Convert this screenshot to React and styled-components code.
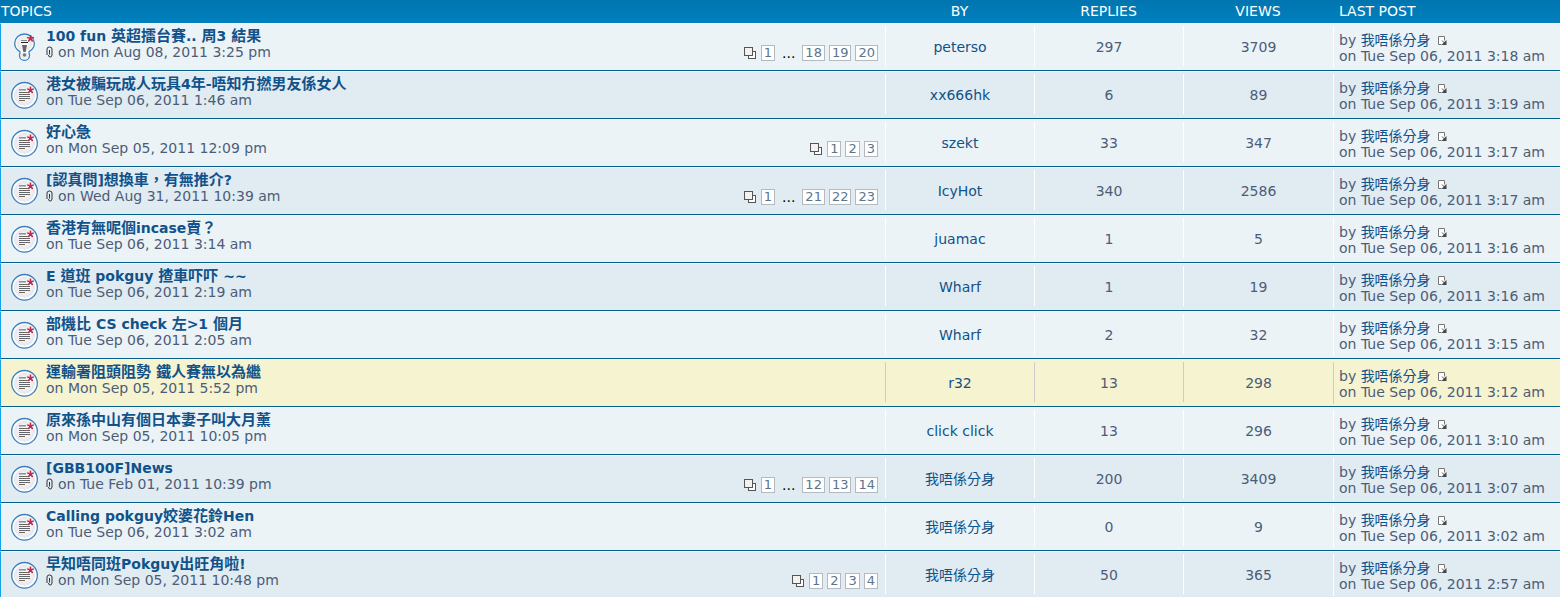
import React from 'react';
import styled, { createGlobalStyle } from 'styled-components';

const GlobalStyle = createGlobalStyle`
  body {
    margin: 0;
    background: #ffffff;
    font-family: "DejaVu Sans", "Noto Sans CJK TC", sans-serif;
    font-size: 14px;
    line-height: 16px;
    color: #4c5d77;
  }
`;

const Forum = styled.main`
  max-height: 100vh;
  overflow: hidden;
`;

const TopicTable = styled.table`
  width: 100%;
  table-layout: fixed;
  border-collapse: separate;
  border-spacing: 0;
`;

const Col = styled.col`
  width: ${(p) => p.$width};
`;

const HeadRow = styled.tr`
  background: linear-gradient(#0075b0, #0081be);
`;

const HeadCell = styled.th`
  height: 23px;
  padding: ${(p) => p.$pad || '0 0 2px'};
  box-sizing: border-box;
  color: #ffffff;
  font-weight: normal;
  text-align: ${(p) => p.$align || 'center'};
  text-transform: uppercase;
`;

const Row = styled.tr`
  --rule: ${(p) => (p.$tone === 'global' ? '#cccccc' : '#ffffff')};
  background: ${(p) => ({ light: '#ecf3f7', dark: '#e1ebf2', global: '#f6f3d0' })[p.$tone]};
`;

const Cell = styled.td`
  height: 48px;
  box-sizing: border-box;
  padding: 0;
  vertical-align: top;
  border-top: 1px solid #ffffff;
  border-bottom: 1px solid #00608f;
`;

const TopicCell = styled(Cell)`
  border-left: 1px solid #12a3eb;
`;

const Topic = styled.div`
  display: flex;
  height: 46px;
  padding: 0 7px 0 10px;
  box-sizing: border-box;
`;

const StateIcon = styled.svg`
  flex: none;
  align-self: center;
  width: 27px;
  height: 30px;
`;

const TopicText = styled.div`
  flex: 1;
  padding: 4px 0 0 8px;
`;

const TopicTitle = styled.a`
  display: block;
  height: 16px;
  line-height: 16px;
  color: #105289;
  font-weight: bold;
  text-decoration: none;
  white-space: nowrap;
  &:hover {
    text-decoration: underline;
  }
`;

const Han = styled.span`
  font-size: 15px;
  line-height: 1;
`;

const Posted = styled.div`
  display: flex;
  align-items: center;
  gap: 4px;
  white-space: nowrap;
`;

const ClipIcon = styled.svg`
  width: 8px;
  height: 12px;
`;

const Pages = styled.nav`
  display: flex;
  align-items: center;
  align-self: flex-end;
  gap: 4px;
  padding-bottom: 9px;
  color: #000000;
`;

const PagesIcon = styled.svg`
  width: 12px;
  height: 12px;
  margin-right: 1px;
`;

const PageLink = styled.a`
  padding: 0 2px;
  border: 1px solid #b4bac0;
  background: #ffffff;
  color: #5c758c;
  font-size: 13px;
  line-height: 14px;
  text-decoration: none;
`;

const Ellipsis = styled.span`
  padding: 0 3px;
`;

const Stat = styled.div`
  height: 40px;
  margin-top: 2px;
  border-left: 1px solid var(--rule);
  line-height: 42px;
  text-align: center;
`;

const LastPost = styled.div`
  height: 42px;
  margin-top: 2px;
  padding: 6px 0 0 5px;
  box-sizing: border-box;
  border-left: 1px solid var(--rule);
  white-space: nowrap;
`;

const UserLink = styled.a`
  color: #105289;
  text-decoration: none;
`;

const JumpLink = styled.a`
  margin-left: 7px;
`;

const topics = [
  { title: '100 fun 英超擂台賽.. 周3 結果', posted: 'Mon Aug 08, 2011 3:25 pm', clip: true, pinned: true, pages: [1, '...', 18, 19, 20], by: 'peterso', replies: 297, views: 3709, last: '3:18' },
  { title: '港女被騙玩成人玩具4年-唔知冇撚男友係女人', posted: 'Tue Sep 06, 2011 1:46 am', by: 'xx666hk', replies: 6, views: 89, last: '3:19' },
  { title: '好心急', posted: 'Mon Sep 05, 2011 12:09 pm', pages: [1, 2, 3], by: 'szekt', replies: 33, views: 347, last: '3:17' },
  { title: '[認真問]想換車，有無推介?', posted: 'Wed Aug 31, 2011 10:39 am', clip: true, pages: [1, '...', 21, 22, 23], by: 'IcyHot', replies: 340, views: 2586, last: '3:17' },
  { title: '香港有無呢個incase賣？', posted: 'Tue Sep 06, 2011 3:14 am', by: 'juamac', replies: 1, views: 5, last: '3:16' },
  { title: 'E 道班 pokguy 揸車吓吓 ~~', posted: 'Tue Sep 06, 2011 2:19 am', by: 'Wharf', replies: 1, views: 19, last: '3:16' },
  { title: '部機比 CS check 左>1 個月', posted: 'Tue Sep 06, 2011 2:05 am', by: 'Wharf', replies: 2, views: 32, last: '3:15' },
  { title: '運輸署阻頭阻勢 鐵人賽無以為繼', posted: 'Mon Sep 05, 2011 5:52 pm', tone: 'global', by: 'r32', replies: 13, views: 298, last: '3:12' },
  { title: '原來孫中山有個日本妻子叫大月薰', posted: 'Mon Sep 05, 2011 10:05 pm', by: 'click click', replies: 13, views: 296, last: '3:10' },
  { title: '[GBB100F]News', posted: 'Tue Feb 01, 2011 10:39 pm', clip: true, pages: [1, '...', 12, 13, 14], by: '我唔係分身', replies: 200, views: 3409, last: '3:07' },
  { title: 'Calling pokguy姣婆花鈴Hen', posted: 'Tue Sep 06, 2011 3:02 am', by: '我唔係分身', replies: 0, views: 9, last: '3:02' },
  { title: '早知唔同班Pokguy出旺角啦!', posted: 'Mon Sep 05, 2011 10:48 pm', clip: true, pages: [1, 2, 3, 4], by: '我唔係分身', replies: 50, views: 365, last: '2:57' },
];

function MixedText({ text }) {
  return text
    .split(/([\u3000-\u9fff\uff00-\uffef]+)/)
    .map((part, i) => (i % 2 ? <Han key={i}>{part}</Han> : part));
}

function Star({ y }) {
  return (
    <g transform={`translate(19.5 ${y})`} stroke="#c0284f" strokeWidth="1.5" fill="none">
      <path d="M0 0V-3.600M0 0L3.400-1.100M0 0L-3.400-1.100M0 0L2.200 3M0 0L-2.200 3" />
    </g>
  );
}

function TopicIcon({ pinned }) {
  return (
    <StateIcon viewBox="0 0 27 30" role="img" aria-label={pinned ? 'Pinned topic, unread posts' : 'Unread posts'}>
      <defs>
        <radialGradient id="disc">
          <stop offset="0" stopColor="#ffffff" />
          <stop offset="1" stopColor="#e6e6ec" />
        </radialGradient>
      </defs>
      {pinned ? (
        <>
          <path
            d="M13.500 2C8 2 3.700 6.100 3.700 11.300c0 3.600 2 6.400 4.900 8.100.5.300.6.700.4 1.300-.3.800-.5 1.600-.5 2.500 0 2.900 2.100 5.200 5 5.200s5-2.300 5-5.200c0-.9-.2-1.700-.5-2.500-.2-.6-.1-1 .4-1.300 2.900-1.700 4.900-4.500 4.900-8.100 0-5.200-4.300-9.300-9.800-9.300z"
            fill="#ffffff"
            stroke="#3c80bd"
            strokeWidth="1.300"
          />
          <circle cx="13.500" cy="11.500" r="7.600" fill="url(#disc)" />
          <circle cx="13.500" cy="23.500" r="3.300" fill="url(#disc)" />
          <path d="M10 8.500h6" stroke="#888888" />
          <path d="M10 10.500h7" stroke="#222222" />
          <path d="M11 13h5l-1.400 7h-2.200z" fill="#666666" />
          <circle cx="13.500" cy="23" r="1.800" fill="#777777" />
        </>
      ) : (
        <>
          <circle cx="13.500" cy="15.300" r="12.800" fill="#ffffff" stroke="#3c80bd" strokeWidth="1.300" />
          <circle cx="13.500" cy="15.300" r="10.500" fill="url(#disc)" />
          <path d="M8 9.800h7" stroke="#888888" strokeWidth="1.400" />
          <path d="M8 12.500h9M8 14.500h11M8 16.500h11M8 18.500h11M8 20.500h6" stroke="#666666" />
        </>
      )}
      <Star y={pinned ? 6.5 : 10} />
    </StateIcon>
  );
}

function TopicRow({ topic, index }) {
  return (
    <Row $tone={topic.tone || (index % 2 ? 'dark' : 'light')}>
      <TopicCell>
        <Topic>
          <TopicIcon pinned={topic.pinned} />
          <TopicText>
            <TopicTitle href="#topic"><MixedText text={topic.title} /></TopicTitle>
            <Posted>
              {topic.clip && (
                <ClipIcon viewBox="0 0 8 12" role="img" aria-label="Attachment">
                  <path d="M3.500 4v4.500M1 9V3Q1 1 3.500 1T6 3v6q0 2-1.800 2T2.500 9" fill="none" stroke="#333333" />
                </ClipIcon>
              )}
              on {topic.posted}
            </Posted>
          </TopicText>
          {topic.pages && (
            <Pages aria-label="Topic pages">
              <PagesIcon viewBox="0 0 12 12" aria-hidden="true">
                <rect x="4.500" y="4.500" width="7" height="7" fill="#ffffff" stroke="#555555" />
                <rect x=".5" y=".5" width="8" height="8" fill="#f2f2f2" stroke="#555555" />
              </PagesIcon>
              {topic.pages.map((page) =>
                page === '...' ? <Ellipsis key={page}>...</Ellipsis> : <PageLink key={page} href="#page">{page}</PageLink>
              )}
            </Pages>
          )}
        </Topic>
      </TopicCell>
      <Cell><Stat><UserLink href="#user">{topic.by}</UserLink></Stat></Cell>
      <Cell><Stat>{topic.replies}</Stat></Cell>
      <Cell><Stat>{topic.views}</Stat></Cell>
      <Cell>
        <LastPost>
          by <UserLink href="#user">我唔係分身</UserLink>
          <JumpLink href="#last" aria-label="View the latest post">
            <svg width="9" height="9" viewBox="0 0 9 9">
              <path d="M3.500 8.500h-3v-8h6v4" fill="#ffffff" stroke="#777777" />
              <path d="M8.500 4v5h-5z" fill="#444444" />
              <path d="M4 4.500l2.500 2.500" stroke="#555555" />
            </svg>
          </JumpLink>
          <br />
          on Tue Sep 06, 2011 {topic.last} am
        </LastPost>
      </Cell>
    </Row>
  );
}

export default function App() {
  return (
    <Forum>
      <GlobalStyle />
      <TopicTable>
        <colgroup>
          <Col $width="auto" />
          <Col $width="149px" />
          <Col $width="149px" />
          <Col $width="150px" />
          <Col $width="227px" />
        </colgroup>
        <thead>
          <HeadRow>
            <HeadCell scope="col" $align="left" $pad="0 0 2px 1px">Topics</HeadCell>
            <HeadCell scope="col">By</HeadCell>
            <HeadCell scope="col">Replies</HeadCell>
            <HeadCell scope="col">Views</HeadCell>
            <HeadCell scope="col" $align="left" $pad="0 0 2px 6px">Last post</HeadCell>
          </HeadRow>
        </thead>
        <tbody>
          {topics.map((topic, i) => <TopicRow key={topic.title} topic={topic} index={i} />)}
        </tbody>
      </TopicTable>
    </Forum>
  );
}
